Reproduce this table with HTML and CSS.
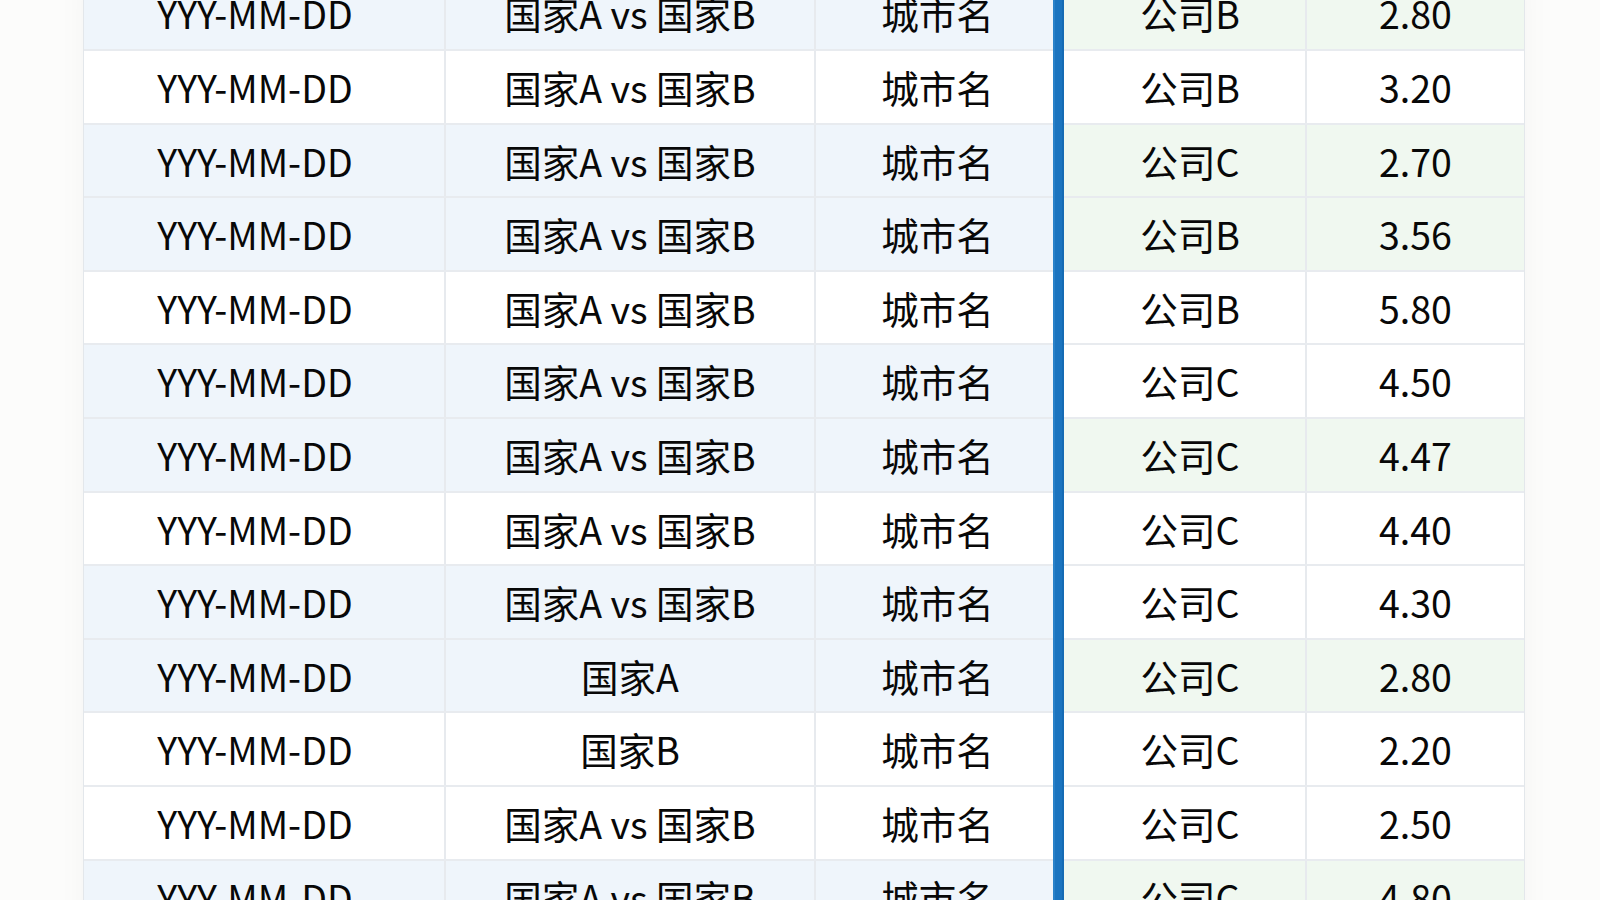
FILE: index.html
```html
<!DOCTYPE html>
<html lang="zh-CN">
<head>
<meta charset="utf-8">
<title>赔率表</title>
<link rel="stylesheet" href="styles.css">
</head>
<body>
<main class="sheet">
  <section class="panel left">
    <div class="row tint"><div class="cell date">YYY-MM-DD</div><div class="cell">国家A vs 国家B</div><div class="cell city">城市名</div></div>
    <div class="row"><div class="cell date">YYY-MM-DD</div><div class="cell">国家A vs 国家B</div><div class="cell city">城市名</div></div>
    <div class="row tint"><div class="cell date">YYY-MM-DD</div><div class="cell">国家A vs 国家B</div><div class="cell city">城市名</div></div>
    <div class="row tint"><div class="cell date">YYY-MM-DD</div><div class="cell">国家A vs 国家B</div><div class="cell city">城市名</div></div>
    <div class="row"><div class="cell date">YYY-MM-DD</div><div class="cell">国家A vs 国家B</div><div class="cell city">城市名</div></div>
    <div class="row tint"><div class="cell date">YYY-MM-DD</div><div class="cell">国家A vs 国家B</div><div class="cell city">城市名</div></div>
    <div class="row tint"><div class="cell date">YYY-MM-DD</div><div class="cell">国家A vs 国家B</div><div class="cell city">城市名</div></div>
    <div class="row"><div class="cell date">YYY-MM-DD</div><div class="cell">国家A vs 国家B</div><div class="cell city">城市名</div></div>
    <div class="row tint"><div class="cell date">YYY-MM-DD</div><div class="cell">国家A vs 国家B</div><div class="cell city">城市名</div></div>
    <div class="row tint"><div class="cell date">YYY-MM-DD</div><div class="cell">国家A</div><div class="cell city">城市名</div></div>
    <div class="row"><div class="cell date">YYY-MM-DD</div><div class="cell">国家B</div><div class="cell city">城市名</div></div>
    <div class="row"><div class="cell date">YYY-MM-DD</div><div class="cell">国家A vs 国家B</div><div class="cell city">城市名</div></div>
    <div class="row tint"><div class="cell date">YYY-MM-DD</div><div class="cell">国家A vs 国家B</div><div class="cell city">城市名</div></div>
  </section>
  <div class="divider"></div>
  <section class="panel right">
    <div class="row green"><div class="cell company">公司B</div><div class="cell">2.80</div></div>
    <div class="row"><div class="cell company">公司B</div><div class="cell">3.20</div></div>
    <div class="row green"><div class="cell company">公司C</div><div class="cell">2.70</div></div>
    <div class="row green"><div class="cell company">公司B</div><div class="cell">3.56</div></div>
    <div class="row"><div class="cell company">公司B</div><div class="cell">5.80</div></div>
    <div class="row"><div class="cell company">公司C</div><div class="cell">4.50</div></div>
    <div class="row green"><div class="cell company">公司C</div><div class="cell">4.47</div></div>
    <div class="row"><div class="cell company">公司C</div><div class="cell">4.40</div></div>
    <div class="row"><div class="cell company">公司C</div><div class="cell">4.30</div></div>
    <div class="row green"><div class="cell company">公司C</div><div class="cell">2.80</div></div>
    <div class="row"><div class="cell company">公司C</div><div class="cell">2.20</div></div>
    <div class="row"><div class="cell company">公司C</div><div class="cell">2.50</div></div>
    <div class="row green"><div class="cell company">公司C</div><div class="cell">4.80</div></div>
  </section>
</main>
</body>
</html>
```

FILE: styles.css
```css
html, body {
  margin: 0;
  padding: 0;
  height: 100%;
  overflow: hidden;
}

body {
  background: #fcfcfb;
  font-family: "Noto Sans CJK SC", "Noto Sans", sans-serif;
  color: #080808;
}

.sheet {
  display: flex;
  width: 1442px;
  margin: -22.6px 0 0 83px;
  box-shadow: 0 0 28px rgba(0, 0, 0, 0.035);
}

.panel {
  display: flex;
  flex-direction: column;
  background: #ffffff;
}

.panel.left {
  width: 970px;
  border-left: 1px solid #e3e7eb;
  box-sizing: border-box;
}

.panel.right {
  width: 461px;
  border-right: 1px solid #e3e7eb;
  box-sizing: border-box;
}

.row {
  display: grid;
  height: 73.6px;
  box-sizing: border-box;
  border-bottom: 2px solid #e8ebef;
}

.left .row {
  grid-template-columns: 362px 370px 237px;
}

.right .row {
  grid-template-columns: 243px 217px;
}

.row.tint {
  background: #eff5fb;
}

.row.green {
  background: #f0f8f0;
}

.cell {
  display: flex;
  align-items: center;
  justify-content: center;
  font-size: 37.5px;
  font-weight: 400;
  line-height: 1;
  white-space: nowrap;
  border-right: 2px solid #e7eaee;
}

.cell:last-child {
  border-right: none;
}

.cell.date {
  padding-right: 18px;
}

.cell.city {
  padding-left: 6px;
}

.cell.company {
  padding-left: 11px;
}

.divider {
  width: 11px;
  flex: none;
  background: #1b74bf;
  box-shadow: inset 2px 0 0 #2a82c9, inset -2px 0 0 #156bb4;
}
```
